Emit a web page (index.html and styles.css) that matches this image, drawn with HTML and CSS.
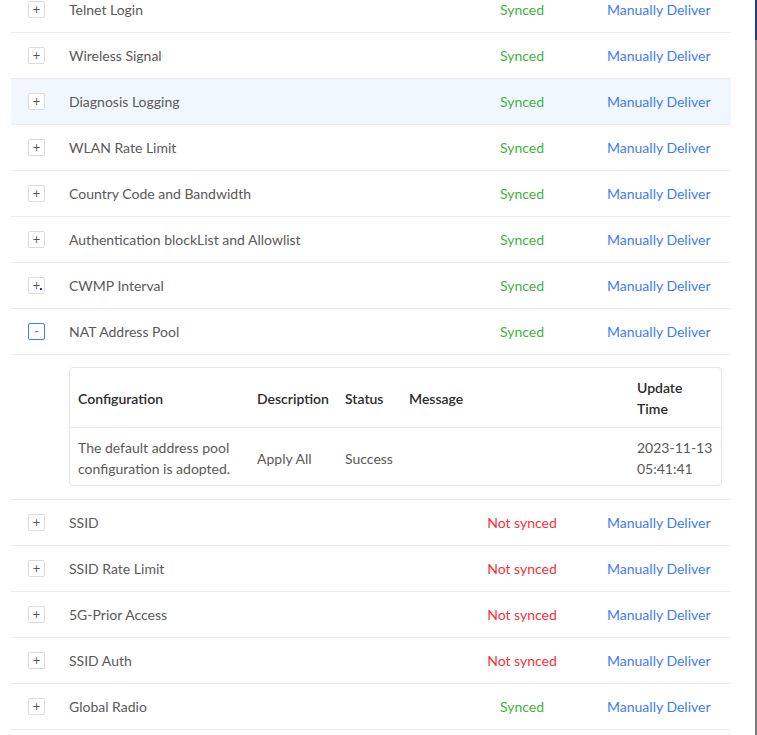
FILE: index.html
```html
<!DOCTYPE html>
<html>
<head>
<meta charset="utf-8">
<link rel="stylesheet" href="styles.css">
</head>
<body>
<div class="page">
  <div class="main">
    <div class="list">
      <div class="row"><div class="c-icon"><span class="exp">+</span></div><div class="c-name">Telnet Login</div><div class="c-status ok">Synced</div><div class="c-act">Manually Deliver</div></div>
      <div class="row"><div class="c-icon"><span class="exp">+</span></div><div class="c-name">Wireless Signal</div><div class="c-status ok">Synced</div><div class="c-act">Manually Deliver</div></div>
      <div class="row hover"><div class="c-icon"><span class="exp">+</span></div><div class="c-name">Diagnosis Logging</div><div class="c-status ok">Synced</div><div class="c-act">Manually Deliver</div></div>
      <div class="row"><div class="c-icon"><span class="exp">+</span></div><div class="c-name">WLAN Rate Limit</div><div class="c-status ok">Synced</div><div class="c-act">Manually Deliver</div></div>
      <div class="row"><div class="c-icon"><span class="exp">+</span></div><div class="c-name">Country Code and Bandwidth</div><div class="c-status ok">Synced</div><div class="c-act">Manually Deliver</div></div>
      <div class="row"><div class="c-icon"><span class="exp">+</span></div><div class="c-name">Authentication blockList and Allowlist</div><div class="c-status ok">Synced</div><div class="c-act">Manually Deliver</div></div>
      <div class="row"><div class="c-icon"><span class="exp">+<span class="dot"></span></span></div><div class="c-name">CWMP Interval</div><div class="c-status ok">Synced</div><div class="c-act">Manually Deliver</div></div>
      <div class="row"><div class="c-icon"><span class="exp open">-</span></div><div class="c-name">NAT Address Pool</div><div class="c-status ok">Synced</div><div class="c-act">Manually Deliver</div></div>
      <div class="expanded">
        <div class="sub">
          <div class="sub-row sub-head">
            <div class="sc sc1">Configuration</div>
            <div class="sc sc2">Description</div>
            <div class="sc sc3">Status</div>
            <div class="sc sc4">Message</div>
            <div class="sc sc5">Update<br>Time</div>
          </div>
          <div class="sub-row sub-body">
            <div class="sc sc1">The default address pool configuration is adopted.</div>
            <div class="sc sc2">Apply All</div>
            <div class="sc sc3">Success</div>
            <div class="sc sc4"></div>
            <div class="sc sc5">2023-11-13<br>05:41:41</div>
          </div>
        </div>
      </div>
      <div class="row"><div class="c-icon"><span class="exp">+</span></div><div class="c-name">SSID</div><div class="c-status bad">Not synced</div><div class="c-act">Manually Deliver</div></div>
      <div class="row"><div class="c-icon"><span class="exp">+</span></div><div class="c-name">SSID Rate Limit</div><div class="c-status bad">Not synced</div><div class="c-act">Manually Deliver</div></div>
      <div class="row"><div class="c-icon"><span class="exp">+</span></div><div class="c-name">5G-Prior Access</div><div class="c-status bad">Not synced</div><div class="c-act">Manually Deliver</div></div>
      <div class="row"><div class="c-icon"><span class="exp">+</span></div><div class="c-name">SSID Auth</div><div class="c-status bad">Not synced</div><div class="c-act">Manually Deliver</div></div>
      <div class="row"><div class="c-icon"><span class="exp">+</span></div><div class="c-name">Global Radio</div><div class="c-status ok">Synced</div><div class="c-act">Manually Deliver</div></div>
    </div>
  </div>
  <div class="edge"></div>
</div>
</body>
</html>
```
FILE: styles.css
```css
html, body {
  margin: 0;
  padding: 0;
  background: #fff;
  overflow: hidden;
}
body {
  font-family: Lato, "Liberation Sans", sans-serif;
  font-size: 14px;
  color: #595959;
}
.page {
  display: flex;
  height: 735px;
  overflow: hidden;
}
.main {
  flex: 1;
  padding: 0 24px 0 11px;
}
.edge {
  width: 2px;
  background: linear-gradient(#1f3c88 0, #1f3c88 40px, #7c7c7c 40px);
}
.list {
  margin-top: -13px;
}
.row {
  display: grid;
  grid-template-columns: 58px 1fr 140px 139px;
  height: 45px;
  align-items: center;
  border-bottom: 1px solid #ececec;
}
.row.hover {
  background: #f0f7ff;
}
.c-icon {
  padding-left: 17px;
  display: flex;
}
.exp {
  position: relative;
  width: 15px;
  height: 15px;
  border: 1px solid #dcdcdc;
  border-radius: 2px;
  display: flex;
  align-items: center;
  justify-content: center;
  font-size: 13px;
  line-height: 1;
  color: #555;
  background: #fff;
}
.exp.open {
  border-color: #3d7cf7;
  color: #3d7cf7;
}
.dot {
  position: absolute;
  width: 2px;
  height: 2px;
  background: #2b2bd6;
  left: 11px;
  top: 10px;
}
.c-name {
  color: #595959;
}
.c-status {
  text-align: center;
}
.ok { color: #3fb33f; }
.bad { color: #f5303c; }
.c-act {
  padding-left: 15px;
  color: #3f7cf6;
}
.expanded {
  padding: 12px 9px 13px 58px;
  border-bottom: 1px solid #ececec;
}
.sub {
  border: 1px solid #e6e6e6;
  border-radius: 4px;
}
.sub-row {
  display: grid;
  grid-template-columns: 179px 88px 64px 1fr 92px;
  align-items: center;
  line-height: 21px;
}
.sub-head {
  color: #2b2b2b;
  font-weight: 600;
  border-bottom: 1px solid #ececec;
}
.sub-head .sc {
  padding: 9px 8px 8px;
}
.sub-body .sc {
  padding: 9px 8px 6px;
}
```
